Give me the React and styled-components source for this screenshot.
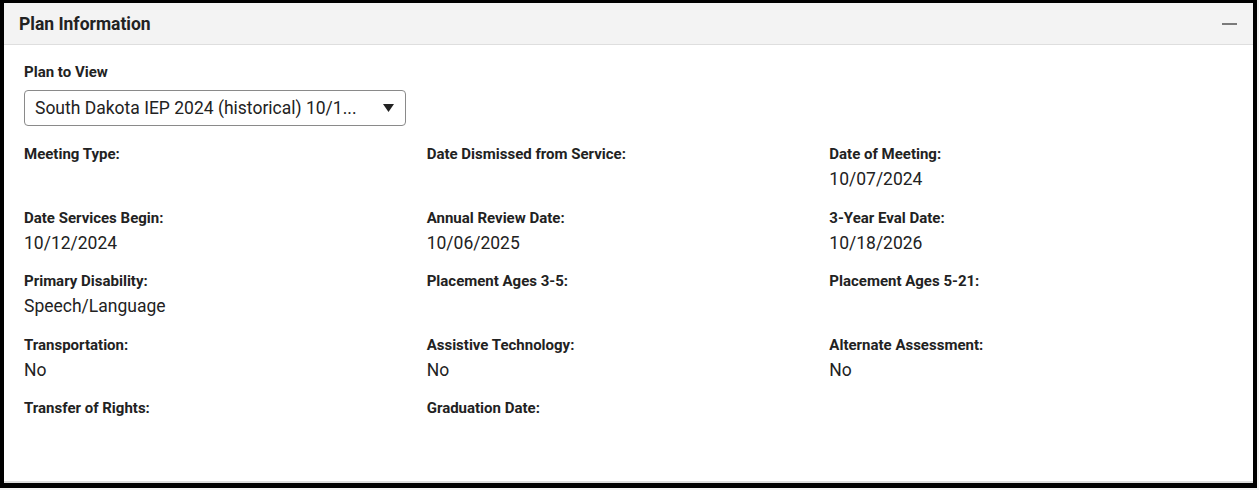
import React from 'react';
import styled, { createGlobalStyle } from 'styled-components';

const GlobalStyle = createGlobalStyle`
  html, body {
    margin: 0;
    padding: 0;
    background: #f4f4f4;
  }
  body {
    font-family: Roboto, "Liberation Sans", Arial, sans-serif;
    color: #212121;
  }
`;

const Frame = styled.div`
  box-sizing: border-box;
  width: 1257px;
  height: 488px;
  border-style: solid;
  border-color: #000;
  border-width: 3px 4px 5px 4px;
  background: #fff;
  display: flex;
  flex-direction: column;
`;

const Panel = styled.section`
  flex: 1;
  display: flex;
  flex-direction: column;
  border-bottom: 2px solid #dcdcdc;
`;

const Header = styled.header`
  height: 41px;
  display: flex;
  align-items: center;
  justify-content: space-between;
  padding: 0 16px 0 15px;
  background: #f3f3f3;
  border-bottom: 1px solid #dedede;
`;

const Title = styled.h2`
  margin: 0;
  font-size: 17.5px;
  font-weight: 700;
  color: #222;
`;

const Collapse = styled.button`
  width: 16px;
  height: 16px;
  padding: 0;
  border: none;
  background: transparent;
  display: flex;
  align-items: center;
  justify-content: center;
  cursor: pointer;

  &::before {
    content: '';
    width: 15px;
    height: 2px;
    background: #7a7a7a;
  }
`;

const Body = styled.div`
  padding: 19px 21px 0 20px;
`;

const Label = styled.div`
  font-size: 15px;
  font-weight: 700;
  line-height: 16px;
  color: #222;
`;

const Select = styled.div`
  box-sizing: border-box;
  margin-top: 10px;
  width: 382px;
  height: 36px;
  border: 1px solid #8a8a8a;
  border-radius: 4px;
  display: flex;
  align-items: center;
  justify-content: space-between;
  padding: 0 11px 0 10px;
  font-size: 17.5px;
  color: #222;
  background: #fff;
`;

const Grid = styled.div`
  margin-top: 20px;
  display: grid;
  grid-template-columns: repeat(3, 1fr);
  row-gap: 18.5px;
`;

const Field = styled.div`
  display: flex;
  flex-direction: column;
`;

const Value = styled.div`
  margin-top: 5px;
  min-height: 24px;
  font-size: 17.5px;
  line-height: 24px;
  color: #222;
`;

const fields = [
  ['Meeting Type:', ''],
  ['Date Dismissed from Service:', ''],
  ['Date of Meeting:', '10/07/2024'],
  ['Date Services Begin:', '10/12/2024'],
  ['Annual Review Date:', '10/06/2025'],
  ['3-Year Eval Date:', '10/18/2026'],
  ['Primary Disability:', 'Speech/Language'],
  ['Placement Ages 3-5:', ''],
  ['Placement Ages 5-21:', ''],
  ['Transportation:', 'No'],
  ['Assistive Technology:', 'No'],
  ['Alternate Assessment:', 'No'],
  ['Transfer of Rights:', ''],
  ['Graduation Date:', ''],
];

export default function App() {
  return (
    <>
      <GlobalStyle />
      <Frame>
        <Panel>
          <Header>
            <Title>Plan Information</Title>
            <Collapse aria-label="Collapse" />
          </Header>
          <Body>
            <Label>Plan to View</Label>
            <Select>
              <span>South Dakota IEP 2024 (historical) 10/1...</span>
              <svg width="11" height="8" viewBox="0 0 11 8">
                <path d="M0 0 L11 0 L5.5 8 Z" fill="#222" />
              </svg>
            </Select>
            <Grid>
              {fields.map(([label, value]) => (
                <Field key={label}>
                  <Label>{label}</Label>
                  <Value>{value}</Value>
                </Field>
              ))}
            </Grid>
          </Body>
        </Panel>
      </Frame>
    </>
  );
}
